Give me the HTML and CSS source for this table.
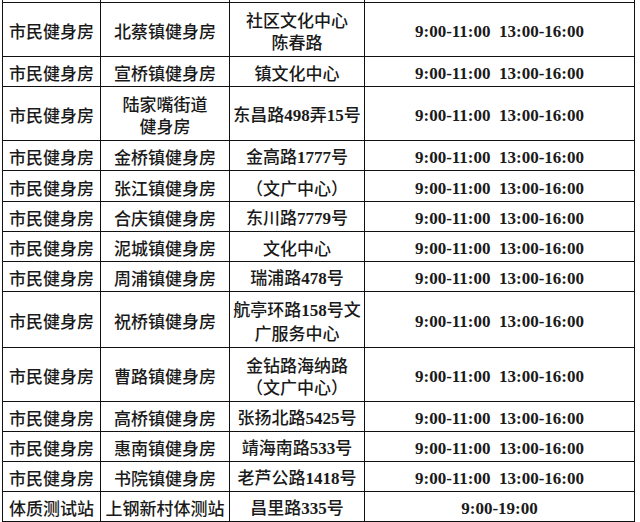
FILE: index.html
```html
<!DOCTYPE html>
<html lang="zh-CN">
<head>
<meta charset="utf-8">
<title>健身房开放时间</title>
<link rel="stylesheet" href="styles.css">
</head>
<body>
<table class="sched">
<colgroup>
<col class="c1"><col class="c2"><col class="c3"><col class="c4">
</colgroup>
<tbody>
<tr class="r-top"><td></td><td></td><td></td><td></td></tr>
<tr class="r2"><td>市民健身房</td><td>北蔡镇健身房</td><td>社区文化中心<br>陈春路</td><td class="t"><span class="n">9:00-11:00&nbsp;&nbsp;13:00-16:00</span></td></tr>
<tr class="r1"><td>市民健身房</td><td>宣桥镇健身房</td><td>镇文化中心</td><td class="t"><span class="n">9:00-11:00&nbsp;&nbsp;13:00-16:00</span></td></tr>
<tr class="r2"><td>市民健身房</td><td>陆家嘴街道<br>健身房</td><td>东昌路<span class="n">498</span>弄<span class="n">15</span>号</td><td class="t"><span class="n">9:00-11:00&nbsp;&nbsp;13:00-16:00</span></td></tr>
<tr class="r1"><td>市民健身房</td><td>金桥镇健身房</td><td>金高路<span class="n">1777</span>号</td><td class="t"><span class="n">9:00-11:00&nbsp;&nbsp;13:00-16:00</span></td></tr>
<tr class="r1b"><td>市民健身房</td><td>张江镇健身房</td><td>（文广中心）</td><td class="t"><span class="n">9:00-11:00&nbsp;&nbsp;13:00-16:00</span></td></tr>
<tr class="r1"><td>市民健身房</td><td>合庆镇健身房</td><td>东川路<span class="n">7779</span>号</td><td class="t"><span class="n">9:00-11:00&nbsp;&nbsp;13:00-16:00</span></td></tr>
<tr class="r1"><td>市民健身房</td><td>泥城镇健身房</td><td>文化中心</td><td class="t"><span class="n">9:00-11:00&nbsp;&nbsp;13:00-16:00</span></td></tr>
<tr class="r1"><td>市民健身房</td><td>周浦镇健身房</td><td>瑞浦路<span class="n">478</span>号</td><td class="t"><span class="n">9:00-11:00&nbsp;&nbsp;13:00-16:00</span></td></tr>
<tr class="r2b"><td>市民健身房</td><td>祝桥镇健身房</td><td>航亭环路<span class="n">158</span>号文<br>广服务中心</td><td class="t"><span class="n">9:00-11:00&nbsp;&nbsp;13:00-16:00</span></td></tr>
<tr class="r2"><td>市民健身房</td><td>曹路镇健身房</td><td>金钻路海纳路<br>（文广中心）</td><td class="t"><span class="n">9:00-11:00&nbsp;&nbsp;13:00-16:00</span></td></tr>
<tr class="r1"><td>市民健身房</td><td>高桥镇健身房</td><td>张扬北路<span class="n">5425</span>号</td><td class="t"><span class="n">9:00-11:00&nbsp;&nbsp;13:00-16:00</span></td></tr>
<tr class="r1"><td>市民健身房</td><td>惠南镇健身房</td><td>靖海南路<span class="n">533</span>号</td><td class="t"><span class="n">9:00-11:00&nbsp;&nbsp;13:00-16:00</span></td></tr>
<tr class="r1"><td>市民健身房</td><td>书院镇健身房</td><td>老芦公路<span class="n">1418</span>号</td><td class="t"><span class="n">9:00-11:00&nbsp;&nbsp;13:00-16:00</span></td></tr>
<tr class="r1"><td>体质测试站</td><td>上钢新村体测站</td><td>昌里路<span class="n">335</span>号</td><td class="t"><span class="n">9:00-19:00</span></td></tr>
</tbody>
</table>
</body>
</html>
```
FILE: styles.css
```css
html, body {
  margin: 0;
  padding: 0;
  background: #fff;
  overflow: hidden;
  width: 640px;
  height: 522px;
}

.sched {
  border-collapse: collapse;
  table-layout: fixed;
  width: 632px;
  margin: -1px 0 0 2px;
  font-family: "Noto Sans CJK SC", sans-serif;
  font-size: 17px;
  font-weight: 500;
  color: #1a1a1a;
}

.c1 { width: 98px; }
.c2 { width: 129px; }
.c3 { width: 135px; }
.c4 { width: 270px; }

.sched td {
  border: 1px solid #111;
  text-align: center;
  vertical-align: middle;
  padding: 3px 0 0 0;
  line-height: 22px;
  white-space: nowrap;
  overflow: hidden;
}

.r-top td { height: 2px; padding: 0; line-height: 0; }
.r1 td { height: 26px; }
.r1b td { height: 27px; }
.r2 td { height: 50px; }
.r2b td { height: 52px; }

.n {
  font-family: "Liberation Serif", serif;
  font-weight: 700;
}

.t {
  font-size: 17px;
}
```
